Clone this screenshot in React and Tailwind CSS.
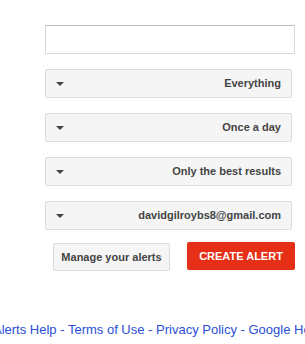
import React from "react";

function Arrow() {
  return (
    <span className="block w-0 h-0 border-l-[4px] border-r-[4px] border-t-[4px] border-l-transparent border-r-transparent border-t-[#444]" />
  );
}

function Select({ label }) {
  return (
    <div className="w-[247px] h-[29px] flex items-center justify-between pl-[10px] pr-[10px] border border-[#dcdcdc] rounded-[2px] bg-[#f5f5f5] text-[11px] font-bold text-[#444]">
      <Arrow />
      <span>{label}</span>
    </div>
  );
}

export default function App() {
  return (
    <div className="w-[305px] h-[344px] bg-white overflow-hidden relative" style={{ fontFamily: '"Liberation Sans", Arial, sans-serif' }}>
      <div className="pt-[25px] pl-[45px] flex flex-col">
        <div className="w-[250px] h-[29px] border border-[#d9d9d9] border-t-[#c0c0c0] bg-white" />
        <div className="mt-[15px] flex flex-col gap-[15px]">
          <Select label="Everything" />
          <Select label="Once a day" />
          <Select label="Only the best results" />
          <Select label="davidgilroybs8@gmail.com" />
        </div>
        <div className="mt-[12px] flex items-start">
          <div className="ml-[8px] mt-[1px] w-[117px] h-[28px] flex items-center justify-center border border-[#dcdcdc] rounded-[2px] bg-[#f5f5f5] text-[11px] font-bold text-[#444]">
            Manage your alerts
          </div>
          <div className="ml-[17px] w-[108px] h-[28px] flex items-center justify-center rounded-[2px] bg-[#e62f17] text-[11px] font-bold text-white">
            CREATE ALERT
          </div>
        </div>
      </div>
      <div className="absolute left-[-7px] top-[320px] whitespace-nowrap text-[13px] text-[#2a4fd6]">
        Alerts Help - Terms of Use - Privacy Policy - Google Help
      </div>
    </div>
  );
}
